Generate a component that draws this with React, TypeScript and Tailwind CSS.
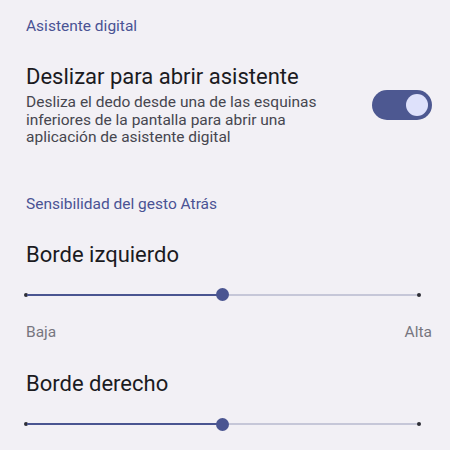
import React from "react";

const font = { fontFamily: "Roboto, 'Noto Sans', sans-serif" };

function Slider() {
  return (
    <div className="ml-[-2px] flex h-[20px] w-[397px] items-center">
      <div className="h-[4px] w-[4px] shrink-0 rounded-full bg-[#2e2e36]" />
      <div className="-ml-px h-[2px] flex-1 bg-[#4a5591]" />
      <div className="-mx-px h-[13px] w-[13px] shrink-0 rounded-full bg-[#4a5591] relative" />
      <div className="h-[2px] flex-1 bg-[#c6c7d8]" />
      <div className="-ml-px h-[4px] w-[4px] shrink-0 rounded-full bg-[#2e2e36]" />
    </div>
  );
}

function Toggle({ on }: { on: boolean }) {
  return (
    <div
      className={`flex h-[30px] w-[60px] shrink-0 items-center rounded-full px-[4px] ${
        on ? "justify-end bg-[#4d5891]" : "justify-start bg-[#c6c7d8]"
      }`}
    >
      <div className="h-[22px] w-[22px] rounded-full bg-[#dee1fb]" />
    </div>
  );
}

export default function App() {
  return (
    <div className="h-[450px] w-[450px] overflow-hidden bg-[#f2f0f5] pl-[26px] pr-[18px]" style={font}>
      <div className="pt-[16px] text-[15.5px] leading-[20px] text-[#4a5394]">Asistente digital</div>

      <div className="mt-[28px] flex items-center justify-between">
        <div className="w-[320px]">
          <div className="text-[22px] leading-[26px] text-[#1b1b1f]">Deslizar para abrir asistente</div>
          <div className="mt-[4px] text-[15.5px] leading-[17.5px] text-[#46464f]">
            Desliza el dedo desde una de las esquinas inferiores de la pantalla para abrir una aplicación de
            asistente digital
          </div>
        </div>
        <Toggle on />
      </div>

      <div className="mt-[47px] text-[15.5px] leading-[20px] text-[#4a5394]">Sensibilidad del gesto Atrás</div>

      <div className="mt-[28px] text-[22px] leading-[26px] text-[#1b1b1f]">Borde izquierdo</div>
      <div className="mt-[17px]">
        <Slider />
      </div>
      <div className="mt-[17.5px] flex justify-between text-[15.5px] leading-[20px] text-[#77767f]">
        <span>Baja</span>
        <span>Alta</span>
      </div>

      <div className="mt-[29px] text-[22px] leading-[26px] text-[#1b1b1f]">Borde derecho</div>
      <div className="mt-[17px]">
        <Slider />
      </div>
    </div>
  );
}
